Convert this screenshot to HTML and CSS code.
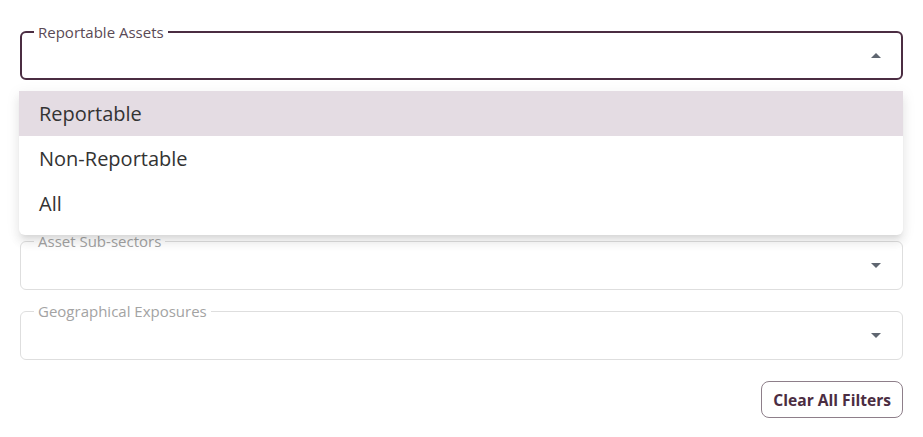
FILE: index.html
```html
<!DOCTYPE html>
<html>
<head>
<meta charset="utf-8">
<link rel="stylesheet" href="styles.css">
</head>
<body>
<div class="page">
  <div class="field active">
    <fieldset class="outline"><legend>Reportable Assets</legend></fieldset>
    <svg class="arrow" width="10" height="5" viewBox="0 0 10 5"><path d="M0 5 L5 0 L10 5 Z"/></svg>
  </div>
  <div class="field">
    <fieldset class="outline"><legend></legend></fieldset>
    <svg class="arrow" width="10" height="5" viewBox="0 0 10 5"><path d="M0 0 L10 0 L5 5 Z"/></svg>
  </div>
  <div class="field">
    <fieldset class="outline"><legend></legend></fieldset>
    <svg class="arrow" width="10" height="5" viewBox="0 0 10 5"><path d="M0 0 L10 0 L5 5 Z"/></svg>
  </div>
  <div class="field">
    <fieldset class="outline"><legend>Asset Sub-sectors</legend></fieldset>
    <svg class="arrow" width="10" height="5" viewBox="0 0 10 5"><path d="M0 0 L10 0 L5 5 Z"/></svg>
  </div>
  <div class="field">
    <fieldset class="outline"><legend>Geographical Exposures</legend></fieldset>
    <svg class="arrow" width="10" height="5" viewBox="0 0 10 5"><path d="M0 0 L10 0 L5 5 Z"/></svg>
  </div>
  <div class="actions">
    <button class="clear">Clear All Filters</button>
  </div>
  <ul class="menu">
    <li class="item selected">Reportable</li>
    <li class="item">Non-Reportable</li>
    <li class="item">All</li>
  </ul>
</div>
</body>
</html>
```

FILE: styles.css
```css
* { box-sizing: border-box; }
html, body { margin: 0; padding: 0; background: #fff; }
body { font-family: "Open Sans", "Noto Sans", sans-serif; }
.page {
  position: relative;
  padding: 31px 20px 0 20px;
  display: flex;
  flex-direction: column;
  gap: 21px;
}
.field {
  position: relative;
  height: 49px;
  display: flex;
  align-items: center;
  justify-content: flex-end;
  padding-right: 22px;
}
.outline {
  position: absolute;
  top: -8px; left: 0; right: 0; bottom: 0;
  margin: 0;
  padding: 0 0 0 13px;
  border: 1px solid #dedede;
  border-radius: 6px;
  pointer-events: none;
}
.outline legend {
  padding: 0 4px;
  font-size: 15px;
  line-height: 16px;
  color: #a3a3a3;
}
.outline legend:empty { padding: 0; }
.active .outline {
  top: -7px;
  border: 2px solid #4b2d42;
  padding-left: 12px;
}
.active .outline legend { color: #5a4a55; }
.arrow { fill: #5f6670; display: block; }
.actions {
  display: flex;
  justify-content: flex-end;
}
.clear {
  height: 37px;
  padding: 0 11px;
  border: 1px solid #8e7f8a;
  border-radius: 8px;
  background: #fff;
  color: #4b2d42;
  font-family: "Open Sans", "Noto Sans", sans-serif;
  font-weight: 700;
  font-size: 15.6px;
}
.menu {
  position: absolute;
  top: 91px; left: 19px;
  width: 884px;
  margin: 0;
  padding: 0 0 9px 0;
  list-style: none;
  background: #fff;
  border-radius: 0 0 6px 6px;
  box-shadow: 0 5px 5px -3px rgba(0,0,0,0.08), 0 8px 10px 1px rgba(0,0,0,0.06), 0 3px 14px 2px rgba(0,0,0,0.05);
}
.item {
  height: 45px;
  display: flex;
  align-items: center;
  padding-left: 20px;
  font-size: 20px;
  color: #333;
}
.item.selected { background: #e4dce3; }
```
